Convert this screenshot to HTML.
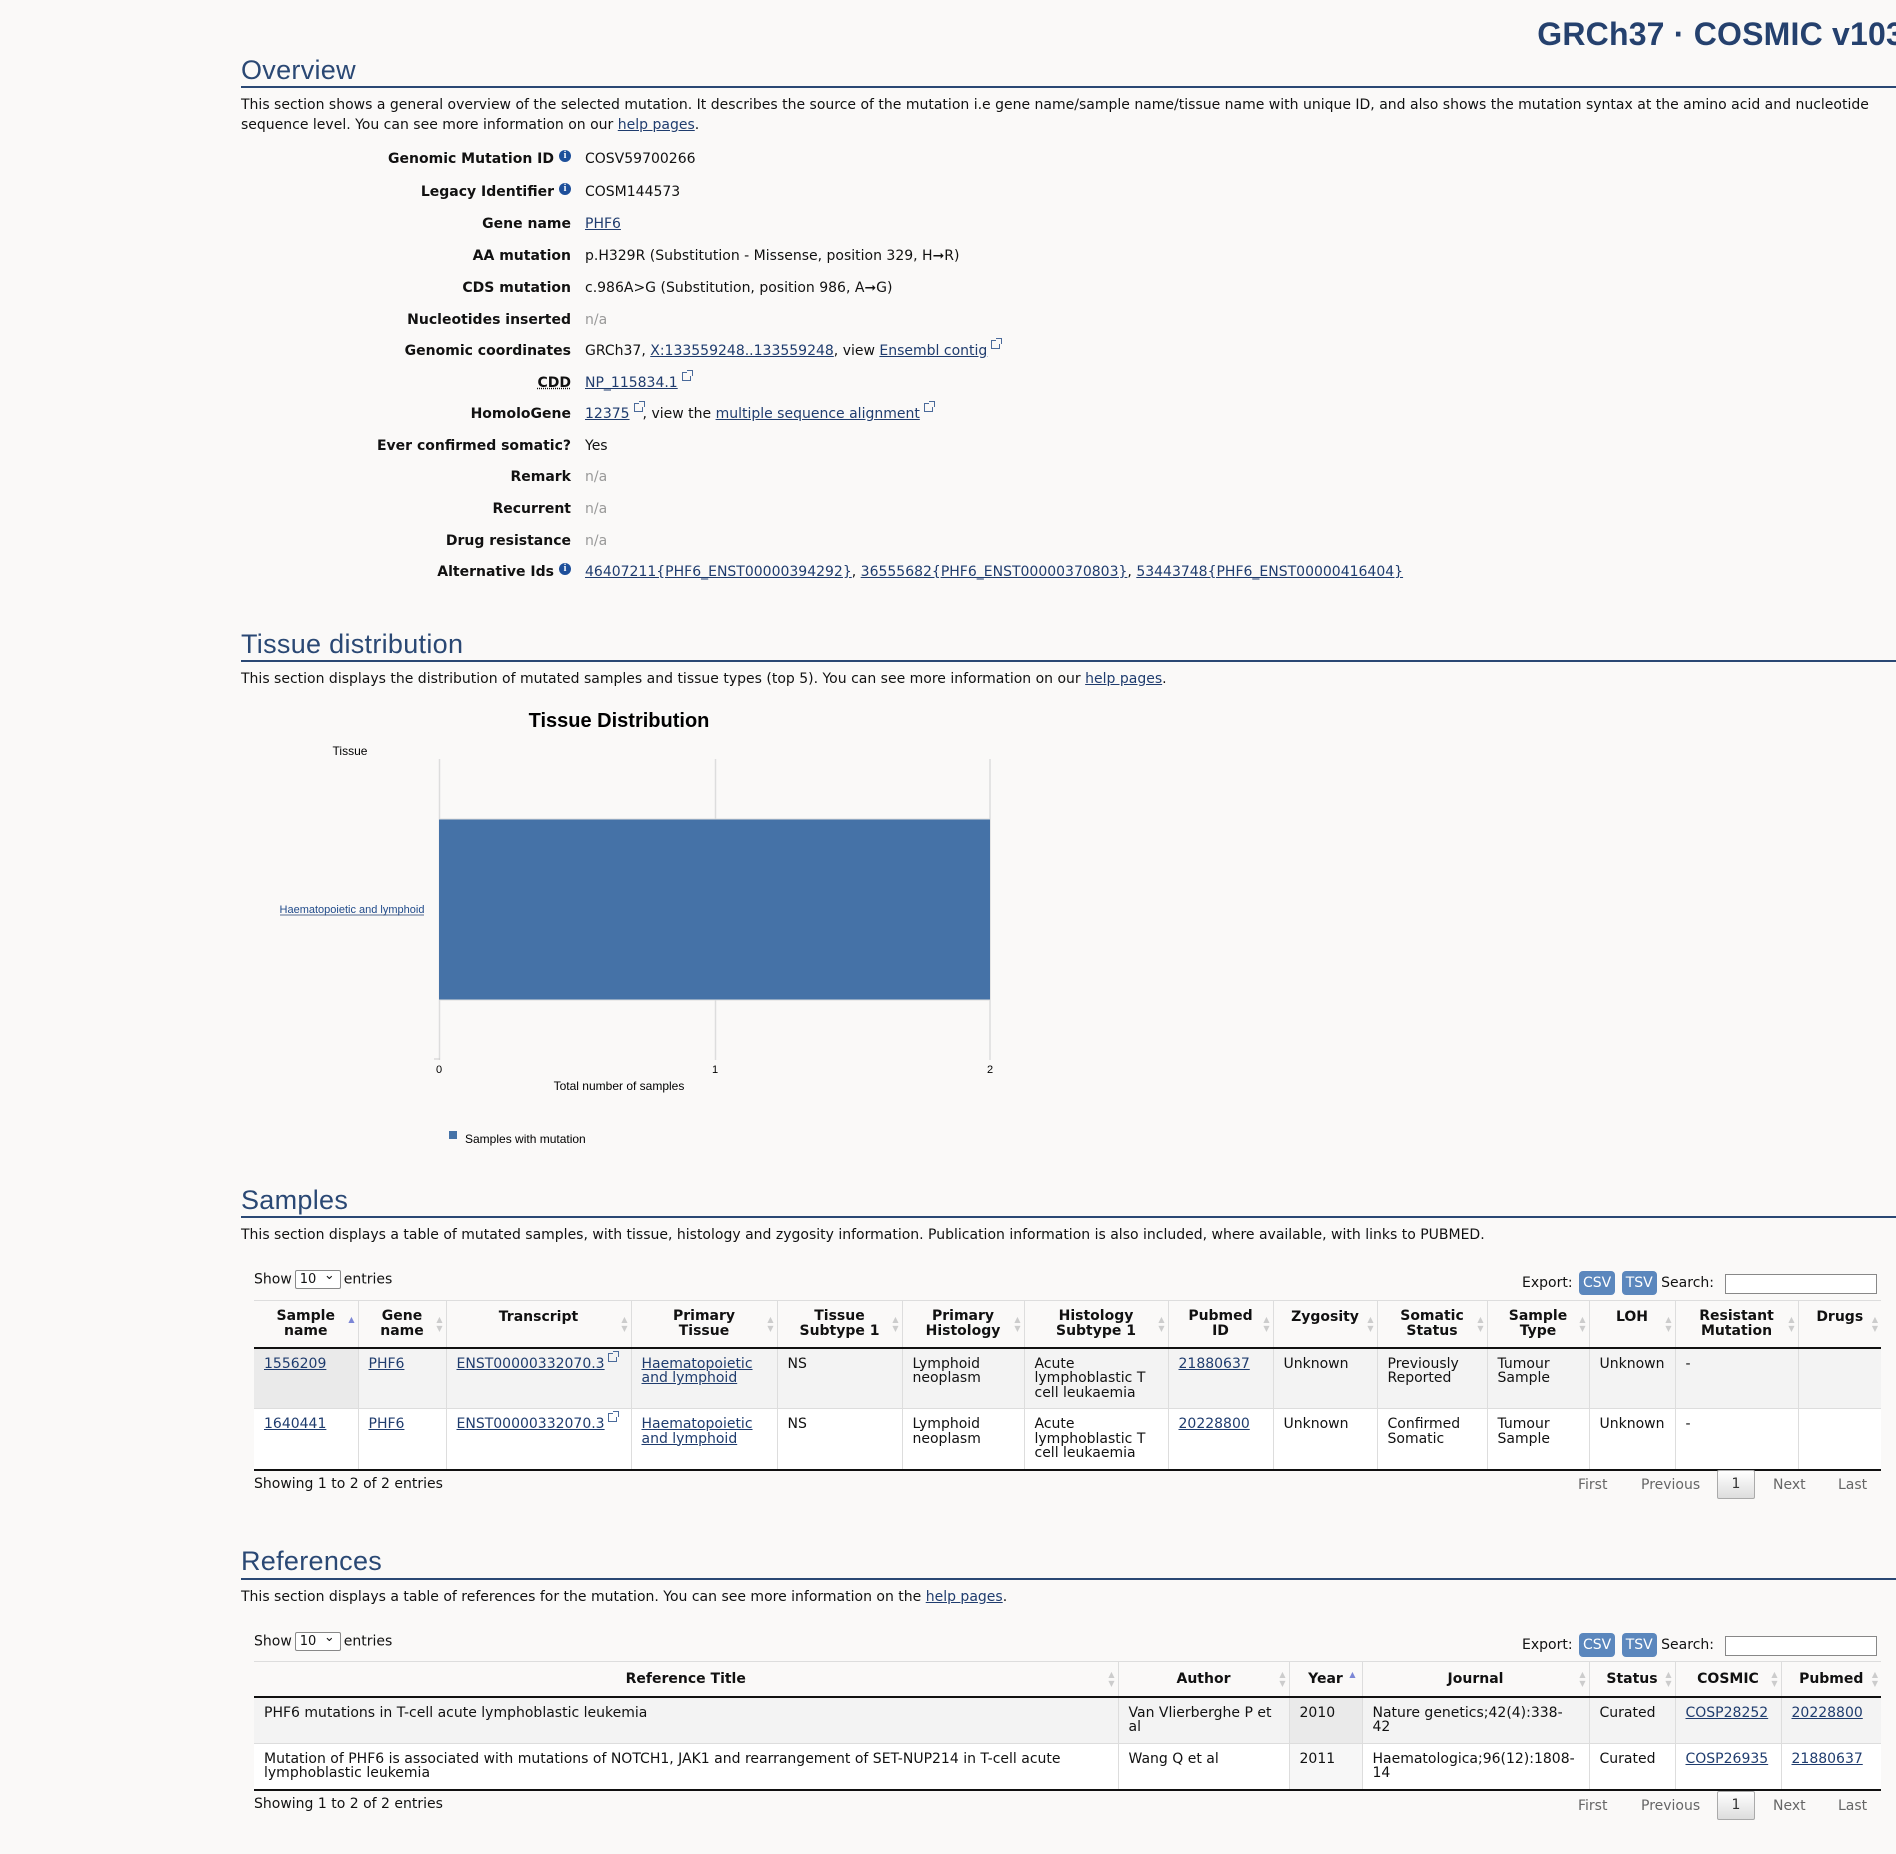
<!DOCTYPE html>
<html><head><meta charset="utf-8">
<style>
*{box-sizing:border-box;margin:0;padding:0}
body{width:1896px;height:1854px;background:#faf9f8;font-family:"DejaVu Sans","Liberation Sans",sans-serif;font-size:14px;color:#111;position:relative;overflow:hidden}
a{color:#1f3c6e;text-decoration:underline}
.abs{position:absolute}
.title{position:absolute;right:-8px;top:16px;font-family:"Liberation Sans",sans-serif;font-size:32px;font-weight:bold;color:#25416e;letter-spacing:0.2px;white-space:nowrap}
h2{position:absolute;left:241px;font-family:"Liberation Sans",sans-serif;font-weight:normal;font-size:27px;color:#2a4874;letter-spacing:0.3px}
.rule{position:absolute;left:241px;width:1655px;height:2px;background:#2a4874}
p.t{position:absolute;left:241px;width:1650px;line-height:20px}
.row{position:absolute;left:241px;height:20px;line-height:20px;width:1600px}
.row .l{position:absolute;right:1270px;font-weight:bold;text-align:right;white-space:nowrap}
.row .v{position:absolute;left:344px;white-space:nowrap}
.na{color:#999}
.i{display:inline-block;width:12px;height:12px;border-radius:50%;background:#1d4f9a;color:#fff;font-size:10px;line-height:12px;text-align:center;font-weight:bold;position:relative;top:-5px;margin-left:5px;font-family:"Liberation Serif",serif}
.ext{display:inline-block;width:9px;height:9px;border:1px solid #4a6a9a;position:relative;top:-6px;margin-left:4px}
.ext:after{content:"";position:absolute;right:-3px;top:-3px;width:5px;height:5px;border-top:1.5px solid #4a6a9a;border-right:1.5px solid #4a6a9a;background:#faf9f8}
table{position:absolute;left:254px;width:1627px;border-collapse:collapse;table-layout:fixed}
th{font-weight:bold;text-align:center;line-height:14.5px;border-left:1px solid #ddd;border-top:1px solid #ddd;border-bottom:2px solid #111;position:relative;padding:0 14px;vertical-align:middle}
th:first-child{border-left:none}
td{vertical-align:top;line-height:14.5px;padding:8px 10px;border-left:1px solid #ddd;border-top:1px solid #ddd}
td:first-child{border-left:none}
td.nw{white-space:nowrap;padding-right:2px}
td.nw .ext{background:transparent}
tr.odd td{background:#f3f3f3}
tr.odd td.sorted{background:#eaeaea}
tr.even td{background:#fff}
tr.odd td.nw .ext:after{background:#f3f3f3}
tr.even td.nw .ext:after{background:#fff}
tr.last td{border-bottom:2px solid #111}
.s{position:absolute;right:3px;top:50%;margin-top:-9px;font-size:8px;line-height:9px;color:#ccc}
.s b{display:block;font-weight:normal}
.s .on{color:#7b86d6}
.show{position:absolute;left:254px}
.sel{display:inline-block;width:46px;height:19px;border:1px solid #888;border-radius:2px;font-size:13px;line-height:17px;padding-left:4px;vertical-align:middle;background:#fff;position:relative;margin:0 3px}
.sel:after{content:"⌄";position:absolute;right:5px;top:-4px;font-size:13px}
.exp{position:absolute;left:1522px;white-space:nowrap}
.btn{display:inline-block;background:#5b87bd;color:#fff;border-radius:4px;padding:0 4px;height:24px;line-height:24px;margin-left:2px}
.srch{position:absolute;left:1725px;width:152px;height:20px;border:1px solid #888;background:#fff}
.foot{position:absolute;left:254px}
.pg{position:absolute;color:#666}
.pgb{position:absolute;width:38px;height:29px;border:1px solid #aaa;border-radius:2px;background:linear-gradient(#fff,#ddd);text-align:center;line-height:27px;color:#333}
</style></head><body>
<div class="title">GRCh37 · COSMIC v103</div>

<h2 style="top:55px">Overview</h2>
<div class="rule" style="top:86px"></div>
<p class="t" style="top:95px">This section shows a general overview of the selected mutation. It describes the source of the mutation i.e gene name/sample name/tissue name with unique ID, and also shows the mutation syntax at the amino acid and nucleotide sequence level. You can see more information on our <a>help pages</a>.</p>

<div class="row" style="top:149px"><span class="l">Genomic Mutation ID<span class="i">i</span></span><span class="v">COSV59700266</span></div>
<div class="row" style="top:182px"><span class="l">Legacy Identifier<span class="i">i</span></span><span class="v">COSM144573</span></div>
<div class="row" style="top:214px"><span class="l">Gene name</span><span class="v"><a>PHF6</a></span></div>
<div class="row" style="top:246px"><span class="l">AA mutation</span><span class="v">p.H329R (Substitution - Missense, position 329, H➞R)</span></div>
<div class="row" style="top:278px"><span class="l">CDS mutation</span><span class="v">c.986A&gt;G (Substitution, position 986, A➞G)</span></div>
<div class="row" style="top:310px"><span class="l">Nucleotides inserted</span><span class="v na">n/a</span></div>
<div class="row" style="top:341px"><span class="l">Genomic coordinates</span><span class="v">GRCh37, <a>X:133559248..133559248</a>, view <a>Ensembl contig</a><span class="ext"></span></span></div>
<div class="row" style="top:373px"><span class="l" style="text-decoration:underline dotted">CDD</span><span class="v"><a>NP_115834.1</a><span class="ext"></span></span></div>
<div class="row" style="top:404px"><span class="l">HomoloGene</span><span class="v"><a>12375</a><span class="ext"></span>, view the <a>multiple sequence alignment</a><span class="ext"></span></span></div>
<div class="row" style="top:436px"><span class="l">Ever confirmed somatic?</span><span class="v">Yes</span></div>
<div class="row" style="top:467px"><span class="l">Remark</span><span class="v na">n/a</span></div>
<div class="row" style="top:499px"><span class="l">Recurrent</span><span class="v na">n/a</span></div>
<div class="row" style="top:531px"><span class="l">Drug resistance</span><span class="v na">n/a</span></div>
<div class="row" style="top:562px"><span class="l">Alternative Ids<span class="i">i</span></span><span class="v"><a>46407211{PHF6_ENST00000394292}</a>, <a>36555682{PHF6_ENST00000370803}</a>, <a>53443748{PHF6_ENST00000416404}</a></span></div>

<h2 style="top:629px">Tissue distribution</h2>
<div class="rule" style="top:660px"></div>
<p class="t" style="top:669px">This section displays the distribution of mutated samples and tissue types (top 5). You can see more information on our <a>help pages</a>.</p>

<svg class="abs" style="left:0;top:0" width="1100" height="1160">
<g font-family="Liberation Sans, sans-serif">
<text x="619" y="727" text-anchor="middle" font-size="20" font-weight="bold">Tissue Distribution</text>
<text x="350" y="755" text-anchor="middle" font-size="12">Tissue</text>
<line x1="439.5" y1="759" x2="439.5" y2="1060" stroke="#ddd" stroke-width="1.5"/>
<line x1="715.5" y1="759" x2="715.5" y2="1060" stroke="#ddd" stroke-width="1.5"/>
<line x1="990" y1="759" x2="990" y2="1060" stroke="#ddd" stroke-width="1.5"/>
<line x1="434" y1="1059" x2="440" y2="1059" stroke="#ccc" stroke-width="1"/>
<rect x="439" y="819" width="551" height="181" fill="#4572a7"/>
<line x1="439" y1="819" x2="990" y2="819" stroke="#ddd"/>
<line x1="439" y1="1000" x2="990" y2="1000" stroke="#ddd"/>
<text x="352" y="913" text-anchor="middle" font-size="11" fill="#1f4a8a">Haematopoietic and lymphoid</text>
<line x1="280" y1="915" x2="424" y2="915" stroke="#1f3c6e" stroke-width="0.8"/>
<text x="439" y="1073" text-anchor="middle" font-size="11">0</text>
<text x="715" y="1073" text-anchor="middle" font-size="11">1</text>
<text x="990" y="1073" text-anchor="middle" font-size="11">2</text>
<text x="619" y="1090" text-anchor="middle" font-size="12">Total number of samples</text>
<rect x="449" y="1131" width="8" height="8" fill="#4572a7"/>
<text x="465" y="1143" font-size="12">Samples with mutation</text>
</g></svg>

<h2 style="top:1185px">Samples</h2>
<div class="rule" style="top:1216px"></div>
<p class="t" style="top:1225px">This section displays a table of mutated samples, with tissue, histology and zygosity information. Publication information is also included, where available, with links to PUBMED.</p>

<div class="show" style="top:1270px">Show<span class="sel">10</span>entries</div>
<div class="exp" style="top:1271px">Export: <span class="btn">CSV</span> <span class="btn">TSV</span> Search:</div>
<div class="srch" style="top:1274px"></div>

<table style="top:1300px">
<colgroup><col style="width:104px"><col style="width:88px"><col style="width:185px"><col style="width:146px"><col style="width:125px"><col style="width:122px"><col style="width:144px"><col style="width:105px"><col style="width:104px"><col style="width:110px"><col style="width:102px"><col style="width:86px"><col style="width:123px"><col style="width:83px"></colgroup>
<tr style="height:47px">
<th>Sample name<span class="s"><b class="on">▲</b><b style="color:transparent">▼</b></span></th>
<th>Gene name<span class="s"><b>▲</b><b>▼</b></span></th>
<th style="vertical-align:top;padding-top:9px">Transcript<span class="s"><b>▲</b><b>▼</b></span></th>
<th>Primary Tissue<span class="s"><b>▲</b><b>▼</b></span></th>
<th>Tissue Subtype 1<span class="s"><b>▲</b><b>▼</b></span></th>
<th>Primary Histology<span class="s"><b>▲</b><b>▼</b></span></th>
<th>Histology Subtype 1<span class="s"><b>▲</b><b>▼</b></span></th>
<th>Pubmed ID<span class="s"><b>▲</b><b>▼</b></span></th>
<th style="vertical-align:top;padding-top:9px">Zygosity<span class="s"><b>▲</b><b>▼</b></span></th>
<th>Somatic Status<span class="s"><b>▲</b><b>▼</b></span></th>
<th>Sample Type<span class="s"><b>▲</b><b>▼</b></span></th>
<th style="vertical-align:top;padding-top:9px">LOH<span class="s"><b>▲</b><b>▼</b></span></th>
<th>Resistant Mutation<span class="s"><b>▲</b><b>▼</b></span></th>
<th style="vertical-align:top;padding-top:9px">Drugs<span class="s"><b>▲</b><b>▼</b></span></th>
</tr>
<tr class="odd" style="height:59px"><td class="sorted"><a>1556209</a></td><td><a>PHF6</a></td><td class="nw"><a>ENST00000332070.3</a><span class="ext" style="margin-left:3px"></span></td><td><a>Haematopoietic and lymphoid</a></td><td>NS</td><td>Lymphoid neoplasm</td><td>Acute lymphoblastic T cell leukaemia</td><td><a>21880637</a></td><td>Unknown</td><td>Previously Reported</td><td>Tumour Sample</td><td>Unknown</td><td>-</td><td></td></tr>
<tr class="even last" style="height:59px"><td><a>1640441</a></td><td><a>PHF6</a></td><td class="nw"><a>ENST00000332070.3</a><span class="ext" style="margin-left:3px"></span></td><td><a>Haematopoietic and lymphoid</a></td><td>NS</td><td>Lymphoid neoplasm</td><td>Acute lymphoblastic T cell leukaemia</td><td><a>20228800</a></td><td>Unknown</td><td>Confirmed Somatic</td><td>Tumour Sample</td><td>Unknown</td><td>-</td><td></td></tr>
</table>
<div class="foot" style="top:1476px">Showing 1 to 2 of 2 entries</div>
<div class="pg" style="left:1578px;top:1477px">First</div>
<div class="pg" style="left:1641px;top:1477px">Previous</div>
<div class="pgb" style="left:1717px;top:1470px">1</div>
<div class="pg" style="left:1773px;top:1477px">Next</div>
<div class="pg" style="left:1838px;top:1477px">Last</div>

<h2 style="top:1546px">References</h2>
<div class="rule" style="top:1578px"></div>
<p class="t" style="top:1587px">This section displays a table of references for the mutation. You can see more information on the <a>help pages</a>.</p>

<div class="show" style="top:1632px">Show<span class="sel">10</span>entries</div>
<div class="exp" style="top:1633px">Export: <span class="btn">CSV</span> <span class="btn">TSV</span> Search:</div>
<div class="srch" style="top:1636px"></div>

<table style="top:1661px">
<colgroup><col style="width:864px"><col style="width:171px"><col style="width:73px"><col style="width:227px"><col style="width:86px"><col style="width:106px"><col style="width:100px"></colgroup>
<tr style="height:35px">
<th>Reference Title<span class="s"><b>▲</b><b>▼</b></span></th>
<th>Author<span class="s"><b>▲</b><b>▼</b></span></th>
<th>Year<span class="s" style="right:6px"><b class="on">▲</b><b style="color:transparent">▼</b></span></th>
<th>Journal<span class="s"><b>▲</b><b>▼</b></span></th>
<th>Status<span class="s"><b>▲</b><b>▼</b></span></th>
<th>COSMIC<span class="s"><b>▲</b><b>▼</b></span></th>
<th>Pubmed<span class="s"><b>▲</b><b>▼</b></span></th>
</tr>
<tr class="odd" style="height:45px"><td>PHF6 mutations in T-cell acute lymphoblastic leukemia</td><td>Van Vlierberghe P et al</td><td class="sorted">2010</td><td>Nature genetics;42(4):338-42</td><td>Curated</td><td><a>COSP28252</a></td><td><a>20228800</a></td></tr>
<tr class="even last" style="height:45px"><td>Mutation of PHF6 is associated with mutations of NOTCH1, JAK1 and rearrangement of SET-NUP214 in T-cell acute lymphoblastic leukemia</td><td>Wang Q et al</td><td style="background:#f7f7f7">2011</td><td>Haematologica;96(12):1808-14</td><td>Curated</td><td><a>COSP26935</a></td><td><a>21880637</a></td></tr>
</table>
<div class="foot" style="top:1796px">Showing 1 to 2 of 2 entries</div>
<div class="pg" style="left:1578px;top:1798px">First</div>
<div class="pg" style="left:1641px;top:1798px">Previous</div>
<div class="pgb" style="left:1717px;top:1791px">1</div>
<div class="pg" style="left:1773px;top:1798px">Next</div>
<div class="pg" style="left:1838px;top:1798px">Last</div>
</body></html>
